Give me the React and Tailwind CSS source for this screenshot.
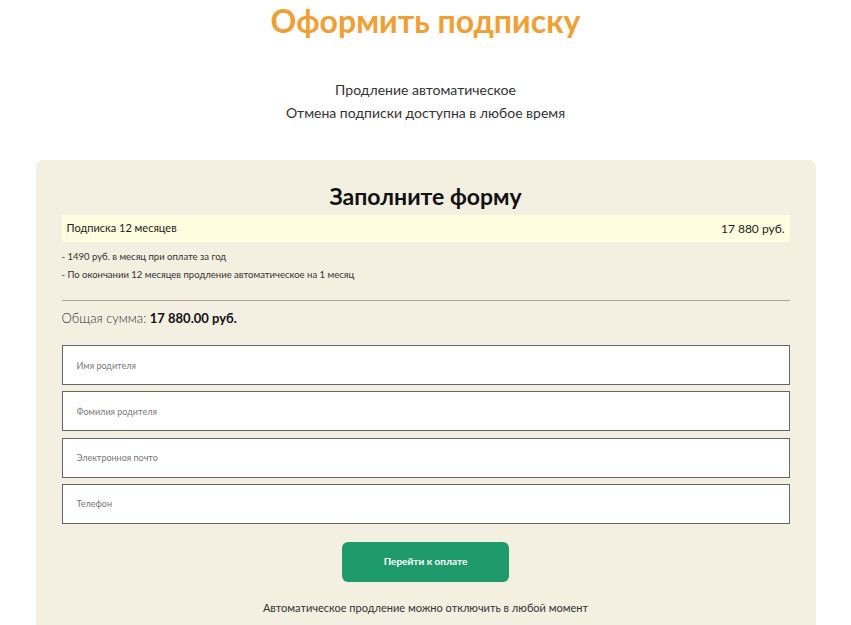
import React from 'react';

const fields = ['Имя родителя', 'Фомилия родителя', 'Электронноя почто', 'Телефон'];

export default function App() {
  return (
    <div className="min-h-screen bg-white font-['Lato','Noto_Sans',sans-serif] text-[#222]">
      <div className="w-[780px] mx-auto">
        {/* Header */}
        <h1 className="text-center text-[32px] leading-[42px] font-bold text-[#f0a032]">
          Оформить подписку
        </h1>
        <div className="mt-[36px] text-center text-[14px] leading-[23px] text-[#333]">
          <p>Продление автоматическое</p>
          <p>Отмена подписки доступна в любое время</p>
        </div>

        {/* Form card */}
        <div className="mt-[36px] bg-[#f3efe1] rounded-t-[7px] px-[26px] pt-[20px] pb-[20px]">
          <h2 className="text-center text-[23px] leading-[32px] font-bold text-[#111]">
            Заполните форму
          </h2>

          <div className="mt-[3px] bg-[#fffde0] h-[27px] flex items-center justify-between px-[5px] text-[11px] text-[#222]">
            <span>Подписка 12 месяцев</span>
            <span className="text-[12px]">17 880 руб.</span>
          </div>

          <div className="mt-[6px] text-[9.5px] leading-[18px] text-[#333]">
            <p>- 1490 руб. в месяц при оплате за год</p>
            <p>- По окончании 12 месяцев продление автоматическое на 1 месяц</p>
          </div>

          <div className="mt-[16px] border-t border-[#a8a59a]" />

          <p className="mt-[8px] text-[13px] leading-[18px] text-[#333] font-light">
            Общая сумма: <span className="font-bold text-[#111]">17 880.00 руб.</span>
          </p>

          <div className="mt-[18px] flex flex-col gap-[6.3px]">
            {fields.map((f) => (
              <input
                key={f}
                type="text"
                placeholder={f}
                className="w-full h-[40px] bg-white border border-[#666] px-[14px] text-[9px] placeholder:text-[#777] outline-none"
              />
            ))}
          </div>

          <div className="mt-[18px] flex justify-center">
            <button className="w-[167px] h-[40px] rounded-[6px] bg-[#1f9b6b] text-white text-[10px] font-bold">
              Перейти к оплате
            </button>
          </div>

          <p className="mt-[18px] text-center text-[11px] leading-[16px] text-[#333]">
            Автоматическое продление можно отключить в любой момент
          </p>
        </div>
      </div>
    </div>
  );
}
